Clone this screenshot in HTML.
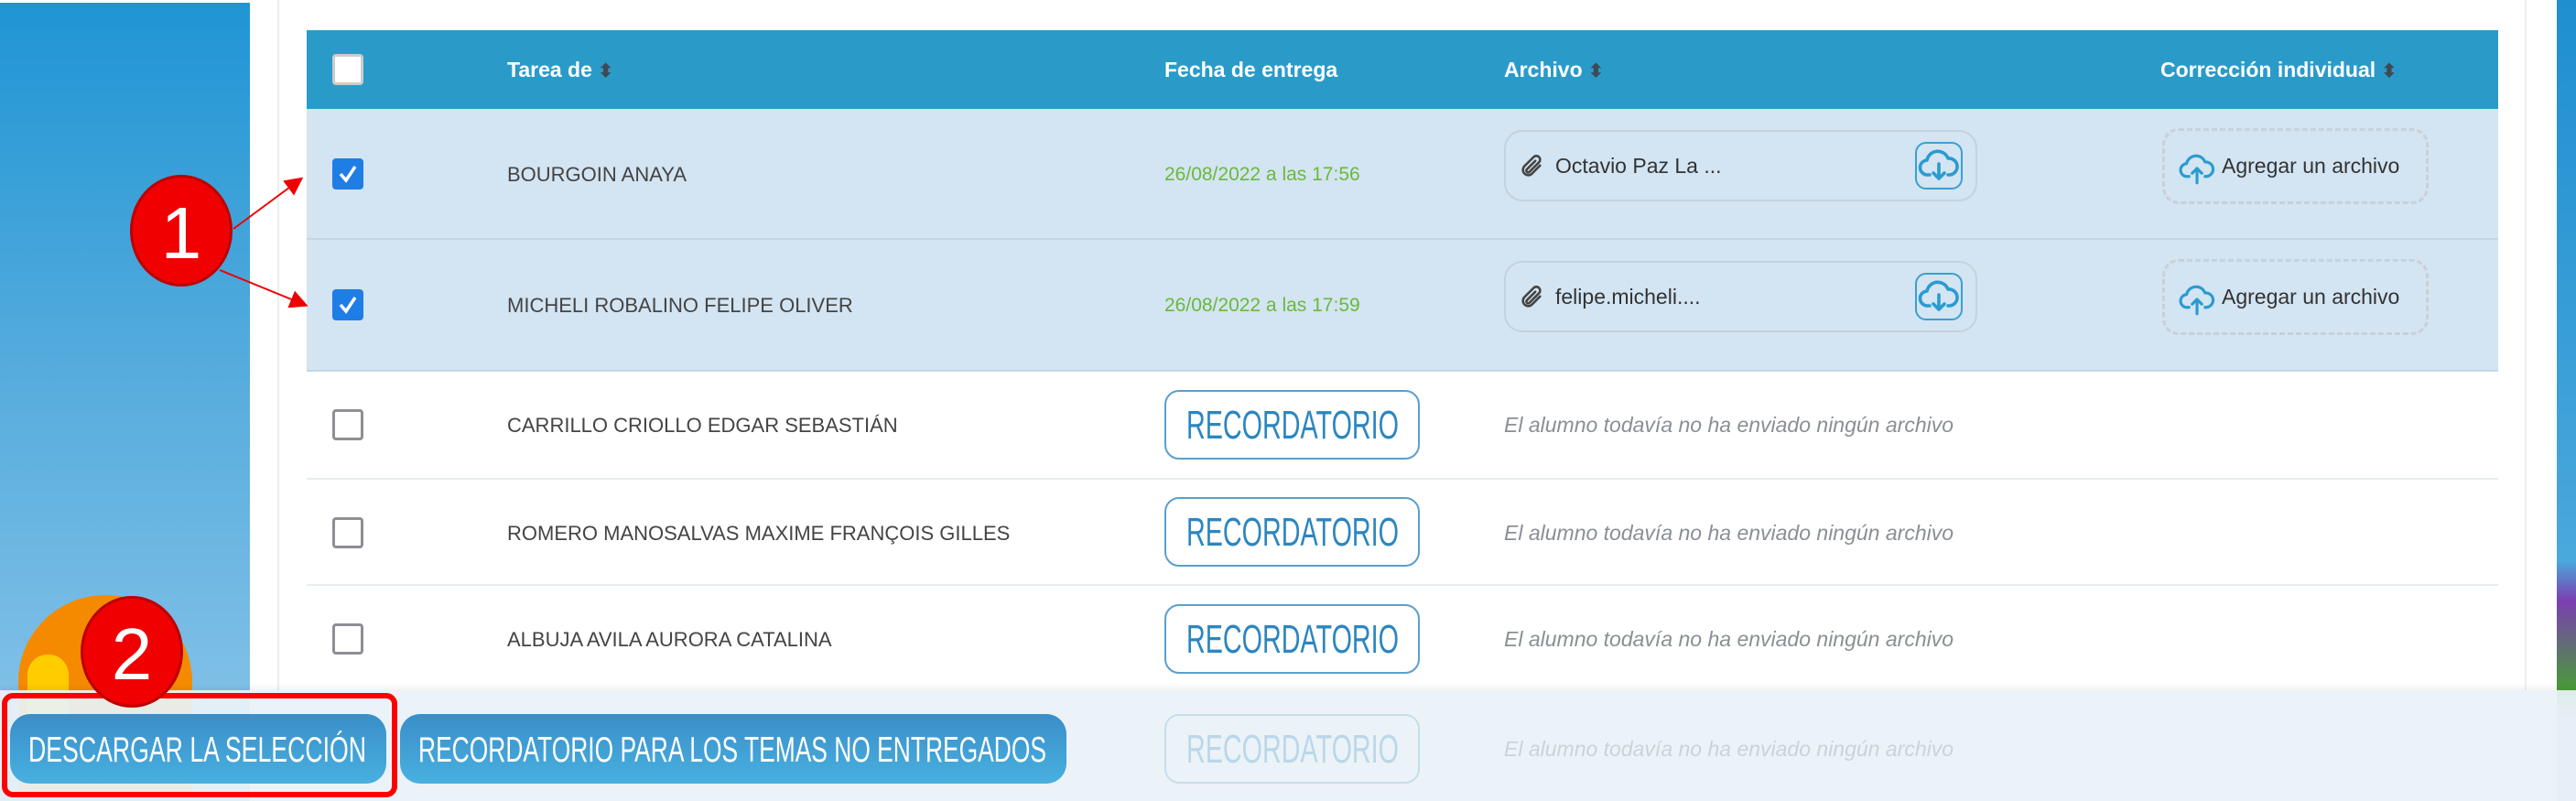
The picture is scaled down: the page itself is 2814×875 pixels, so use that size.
<!DOCTYPE html><html><head><meta charset="utf-8"><style>
*{margin:0;padding:0;box-sizing:border-box}
body{width:2814px;height:875px;overflow:hidden;background:#fff;position:relative;font-family:"Liberation Sans",sans-serif}
.a{position:absolute}
.left{left:0;top:3px;width:273px;height:872px;background:linear-gradient(#1f95d4,#5aaede 50%,#8dc6ea)}
.hdr{left:335px;top:33px;width:2394px;height:86px;background:#2a9bc9;color:#fff;font-size:23px;font-weight:bold}
.hdr .s{color:#3d4a55;font-size:20px}
.row{left:335px;width:2394px;border-bottom:2px solid #e6ecef}
.sel{background:#d3e4f2;border-bottom-color:#c4d6e4}
.cb{position:absolute;left:28px;width:34px;height:34px;border:3px solid #8e8e96;border-radius:4px;background:#fff}
.cb.on{background:#1f7de6;border-color:#1f7de6}
.name{position:absolute;left:219px;font-size:22px;color:#444}
.date{position:absolute;left:937px;font-size:21px;color:#6ab93a}
.rec{position:absolute;left:937px;width:279px;height:76px;border:2px solid #5a9fcc;border-radius:16px}
.rec svg,.btn svg{position:absolute;left:0;top:0}
.none{position:absolute;left:1308px;font-size:23px;color:#8a8f96;font-style:italic}
.file{position:absolute;left:1308px;width:517px;height:78px;border:2px solid #c5d2dc;border-radius:20px;font-size:23px;color:#333;line-height:74px;padding-left:54px}
.dl{position:absolute;right:14px;top:11px;width:52px;height:52px;border:2px solid #3aa0d0;border-radius:12px}
.add{position:absolute;left:2027px;width:291px;height:83px;border:3px dashed #c9d0d8;border-radius:18px;font-size:23px;color:#333;line-height:77px;padding-left:62px}
.circ{border-radius:50%;background:#f00000;border:3px solid #b00;color:#fff;font-size:80px;text-align:center;width:112px;height:122px;line-height:122px}
.btn{top:780px;height:76px;border-radius:22px;background:linear-gradient(#3a8ec8,#48b0e0)}
</style></head><body>
<div class="a left"></div>
<div class="a" style="left:20px;top:650px;width:190px;height:220px;border-radius:95px 95px 0 0;background:#f58a00"></div>
<div class="a" style="left:30px;top:715px;width:45px;height:110px;border-radius:22px;background:#ffcc00"></div>
<div class="a" style="left:303px;top:0;width:2px;height:760px;background:#eceff1"></div>
<div class="a" style="left:2758px;top:0;width:2px;height:760px;background:#eceff1"></div>
<div class="a" style="left:2793px;top:0;width:21px;height:875px;background:linear-gradient(#1f8fd0,#4aa8dc 70%,#7b3fb0 75%,#4a9a3a 86%,#cbe 90%)"></div>

<div class="a hdr">
 <div class="cb" style="top:26px;border-color:#ccc"></div>
 <div class="a" style="left:219px;top:30px">Tarea de <span class="s">⬍</span></div>
 <div class="a" style="left:937px;top:30px">Fecha de entrega</div>
 <div class="a" style="left:1308px;top:30px">Archivo <span class="s">⬍</span></div>
 <div class="a" style="left:2025px;top:30px">Corrección individual <span class="s">⬍</span></div>
</div>

<svg width="0" height="0" style="position:absolute"><defs>
<symbol id="clip" viewBox="0 0 24 24"><path d="M20 11l-8 8a5 5 0 0 1-7-7l9-9a3.3 3.3 0 0 1 5 5l-9 9a1.7 1.7 0 0 1-2.4-2.4l8-8" fill="none" stroke="#444" stroke-width="2.2" stroke-linecap="round"/></symbol>
<symbol id="cd" viewBox="0 0 24 24"><path d="M7 17H6a4 4 0 0 1-.5-8A6 6 0 0 1 17 8a4.5 4.5 0 0 1 1 9h-1M12 11v8m-3-3l3 3 3-3" fill="none" stroke="#2a9bd0" stroke-width="1.8" stroke-linecap="round" stroke-linejoin="round"/></symbol>
<symbol id="cu" viewBox="0 0 24 24"><path d="M7 17H6a4 4 0 0 1-.5-8A6 6 0 0 1 17 8a4.5 4.5 0 0 1 1 9h-1M12 21v-9m-3 3l3-3 3 3" fill="none" stroke="#2a9bd0" stroke-width="1.8" stroke-linecap="round" stroke-linejoin="round"/></symbol>
</defs></svg>

<div class="a row sel" style="top:119px;height:143px">
 <div class="cb on" style="top:54px"><svg width="28" height="28" viewBox="0 0 28 28"><path d="M6 14l6 7 10-15" fill="none" stroke="#fff" stroke-width="3.5"/></svg></div>
 <div class="name" style="top:59px">BOURGOIN ANAYA</div>
 <div class="date" style="top:60px">26/08/2022 a las 17:56</div>
 <div class="file" style="top:23px"><svg class="a" style="left:14px;top:24px" width="28" height="28"><use href="#clip"/></svg>Octavio Paz La ...<div class="dl"><svg width="48" height="48"><use href="#cd"/></svg></div></div>
 <div class="add" style="top:21px"><svg class="a" style="left:14px;top:20px" width="42" height="42"><use href="#cu"/></svg>Agregar un archivo</div>
</div>
<div class="a row sel" style="top:262px;height:144px">
 <div class="cb on" style="top:54px"><svg width="28" height="28" viewBox="0 0 28 28"><path d="M6 14l6 7 10-15" fill="none" stroke="#fff" stroke-width="3.5"/></svg></div>
 <div class="name" style="top:59px">MICHELI ROBALINO FELIPE OLIVER</div>
 <div class="date" style="top:60px">26/08/2022 a las 17:59</div>
 <div class="file" style="top:23px"><svg class="a" style="left:14px;top:24px" width="28" height="28"><use href="#clip"/></svg>felipe.micheli....<div class="dl"><svg width="48" height="48"><use href="#cd"/></svg></div></div>
 <div class="add" style="top:21px"><svg class="a" style="left:14px;top:20px" width="42" height="42"><use href="#cu"/></svg>Agregar un archivo</div>
</div>
<div class="a row" style="top:406px;height:118px">
 <div class="cb" style="top:41px"></div><div class="name" style="top:46px">CARRILLO CRIOLLO EDGAR SEBASTIÁN</div>
 <div class="rec" style="top:20px"><svg width="276" height="72"><text x="22" y="51" font-size="44" fill="#2b86c0" font-family="Liberation Sans" textLength="232" lengthAdjust="spacingAndGlyphs">RECORDATORIO</text></svg></div><div class="none" style="top:45px">El alumno todavía no ha enviado ningún archivo</div>
</div>
<div class="a row" style="top:524px;height:116px">
 <div class="cb" style="top:41px"></div><div class="name" style="top:46px">ROMERO MANOSALVAS MAXIME FRANÇOIS GILLES</div>
 <div class="rec" style="top:19px"><svg width="276" height="72"><text x="22" y="51" font-size="44" fill="#2b86c0" font-family="Liberation Sans" textLength="232" lengthAdjust="spacingAndGlyphs">RECORDATORIO</text></svg></div><div class="none" style="top:45px">El alumno todavía no ha enviado ningún archivo</div>
</div>
<div class="a row" style="top:640px;height:118px;border:none">
 <div class="cb" style="top:41px"></div><div class="name" style="top:46px">ALBUJA AVILA AURORA CATALINA</div>
 <div class="rec" style="top:20px"><svg width="276" height="72"><text x="22" y="51" font-size="44" fill="#2b86c0" font-family="Liberation Sans" textLength="232" lengthAdjust="spacingAndGlyphs">RECORDATORIO</text></svg></div><div class="none" style="top:45px">El alumno todavía no ha enviado ningún archivo</div>
</div>

<div class="a" style="left:0;top:754px;width:2814px;height:121px;background:rgba(234,242,247,.93);box-shadow:0 -3px 6px rgba(0,0,0,.06)"></div>
<div class="rec" style="left:1272px;top:780px;opacity:.25"><svg width="276" height="72"><text x="22" y="51" font-size="44" fill="#2b86c0" font-family="Liberation Sans" textLength="232" lengthAdjust="spacingAndGlyphs">RECORDATORIO</text></svg></div>
<div class="a" style="left:1643px;top:805px;font-size:23px;color:#ccd3d8;font-style:italic">El alumno todavía no ha enviado ningún archivo</div>

<div class="a btn" style="left:11px;width:411px"><svg width="411" height="76"><text x="20" y="52" font-size="39" fill="#fff" font-family="Liberation Sans" textLength="369" lengthAdjust="spacingAndGlyphs">DESCARGAR LA SELECCIÓN</text></svg></div>
<div class="a btn" style="left:437px;width:728px"><svg width="728" height="76"><text x="20" y="52" font-size="39" fill="#fff" font-family="Liberation Sans" textLength="686" lengthAdjust="spacingAndGlyphs">RECORDATORIO PARA LOS TEMAS NO ENTREGADOS</text></svg></div>
<div class="a" style="left:2px;top:757px;width:432px;height:114px;border:6px solid #f00;border-radius:12px"></div>

<svg class="a" style="left:0;top:0" width="400" height="400">
<defs><marker id="ar" markerWidth="10" markerHeight="10" refX="8" refY="5" orient="auto"><path d="M0 0L10 5L0 10z" fill="#e00"/></marker></defs>
<line x1="255" y1="250" x2="328" y2="196" stroke="#e00" stroke-width="2" marker-end="url(#ar)"/>
<line x1="240" y1="295" x2="333" y2="333" stroke="#e00" stroke-width="2" marker-end="url(#ar)"/>
</svg>
<div class="a circ" style="left:142px;top:191px">1</div>
<div class="a circ" style="left:88px;top:651px">2</div>
</body></html>
